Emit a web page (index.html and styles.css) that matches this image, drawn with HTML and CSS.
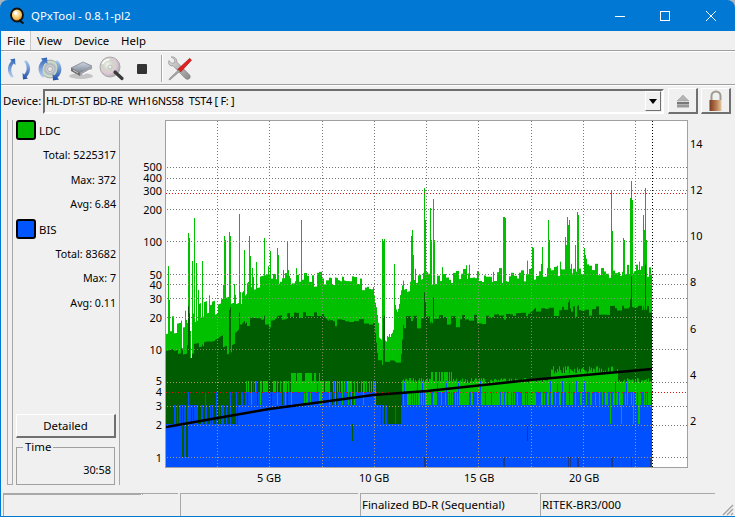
FILE: index.html
```html
<!DOCTYPE html>
<html lang="en">
<head>
<meta charset="utf-8">
<title>QPxTool - 0.8.1-pl2</title>
<link rel="stylesheet" href="styles.css">
</head>
<body>
<div class="window">
  <header class="titlebar">
    <svg class="app-icon" width="20" height="20" viewBox="0 0 20 20">
      <defs><radialGradient id="qg" cx="0.45" cy="0.4" r="0.6"><stop offset="0" stop-color="#fff8e0"/><stop offset="0.6" stop-color="#f6c860"/><stop offset="1" stop-color="#c87820"/></radialGradient></defs>
      <ellipse cx="10" cy="9" rx="6" ry="6.500" fill="url(#qg)" stroke="#111" stroke-width="1.800"/>
      <path d="M12 14l4.500 3.500" stroke="#111" stroke-width="2.200"/>
      <circle cx="8.500" cy="7" r="1.800" fill="#fff"/>
    </svg>
    <span class="title-text">QPxTool - 0.8.1-pl2</span>
    <div class="win-controls">
      <svg class="win-btn" width="46" height="30" viewBox="0 0 46 30"><path d="M18 15.500h10" stroke="#fff"/></svg>
      <svg class="win-btn" width="46" height="30" viewBox="0 0 46 30"><rect x="17.500" y="10.500" width="9" height="9" fill="none" stroke="#fff"/></svg>
      <svg class="win-btn" width="46" height="30" viewBox="0 0 46 30"><path d="M17 10l10 10M27 10L17 20" stroke="#fff"/></svg>
    </div>
  </header>

  <div class="content">
    <nav class="menubar">
      <span class="menu-item menu-active">File</span>
      <span class="menu-item">View</span>
      <span class="menu-item">Device</span>
      <span class="menu-item">Help</span>
    </nav>

    <div class="toolbar">
      <svg class="tool" width="26" height="26" viewBox="0 0 26 26">
        <defs>
          <linearGradient id="ar1" x1="0" y1="0" x2="0" y2="1"><stop offset="0" stop-color="#2f62b8"/><stop offset="1" stop-color="#b8d2f0"/></linearGradient>
          <linearGradient id="ar2" x1="0" y1="0" x2="0" y2="1"><stop offset="0" stop-color="#a8c8ee"/><stop offset="1" stop-color="#1c4ea8"/></linearGradient>
        </defs>
        <path d="M9 2.500L9.500 9 7.700 7.500C4.500 11 4.500 16.500 8 21L5.500 21.500C1 17 .5 10 5.500 5L4 3.500z" fill="url(#ar1)"/>
        <path d="M17 23.500L16.500 17 18.300 18.500C21.500 15 21.500 9.500 18 5L20.500 4.500C25 9 25.500 16 20.500 21L22 22.500z" fill="url(#ar2)"/>
      </svg>
      <svg class="tool" width="26" height="26" viewBox="0 0 26 26">
        <defs>
          <radialGradient id="cd1" cx="0.5" cy="0.5" r="0.55"><stop offset="0.15" stop-color="#eee"/><stop offset="0.5" stop-color="#b0b4c0"/><stop offset="0.75" stop-color="#d0e4c0"/><stop offset="1" stop-color="#a8a8c0"/></radialGradient>
        </defs>
        <circle cx="13" cy="13" r="9" fill="url(#cd1)" stroke="#8a8a9a" stroke-width="0.600"/>
        <circle cx="13" cy="13" r="2.500" fill="#e8e8e8" stroke="#888" stroke-width="0.600"/>
        <path d="M10 1.500L10.500 8 8.700 6.700C5 10 4.500 16 8 21L5.500 21.500C.5 17 0 9 5.500 4.500L4 2.500z" fill="url(#ar1)"/>
        <path d="M16 24.500L15.500 18 17.300 19.300C21 16 21.500 10 18 5L20.500 4.500C25.500 9 26 17 20.500 21.500L22 23.500z" fill="url(#ar2)"/>
      </svg>
      <svg class="tool" width="26" height="26" viewBox="0 0 26 26">
        <defs><linearGradient id="dr1" x1="0" y1="0" x2="0" y2="1"><stop offset="0" stop-color="#cfd8e4"/><stop offset="1" stop-color="#7a8290"/></linearGradient></defs>
        <ellipse cx="13" cy="20" rx="12" ry="3" fill="#c4c4c4"/>
        <path d="M3 12L15 6l9 4-12 7z" fill="url(#dr1)" stroke="#667" stroke-width="0.600"/>
        <path d="M3 12l9 5v3l-9-5z" fill="#6c6c70"/>
        <path d="M12 17l12-7v3L12 20z" fill="#a0a4aa"/>
        <path d="M14 18l8-4.500 1 1-8 4.500z" fill="#fff"/>
        <path d="M5 14l5 3" stroke="#ddd" stroke-width="0.800"/>
      </svg>
      <svg class="tool" width="26" height="26" viewBox="0 0 26 26">
        <defs><radialGradient id="mg" cx="0.4" cy="0.4" r="0.6"><stop offset="0" stop-color="#f4f4f4"/><stop offset="0.4" stop-color="#d0d8c8"/><stop offset="0.7" stop-color="#e0c8d8"/><stop offset="1" stop-color="#b0b0b0"/></radialGradient></defs>
        <circle cx="11" cy="11" r="10" fill="url(#mg)" stroke="#a8a8a8"/>
        <circle cx="11" cy="11" r="2" fill="#eee" stroke="#999" stroke-width="0.500"/>
        <path d="M16 16L23 22.500" stroke="#3a3a3a" stroke-width="3.200" stroke-linecap="round"/>
        <path d="M3.500 8c1.500-3 4-4.500 7-4.500" stroke="#fff" stroke-width="1.500" fill="none"/>
      </svg>
      <span class="stop-icon"></span>
      <span class="tool-sep"></span>
      <svg class="tool" width="25" height="27" viewBox="0 0 27 27">
        <defs><linearGradient id="wr" x1="0" y1="0" x2="1" y2="1"><stop offset="0" stop-color="#e4e4e4"/><stop offset="1" stop-color="#888"/></linearGradient></defs>
        <path d="M2 5l3.500 3 3-1-.5-3.500L4.500 1C8 .5 11 3 10.500 6.500L24 20c1.500 1.500 1.500 3.500 0 4.500s-3 1-4.500-.5L6.500 10.500C3 11.500 1 8.500 2 5z" fill="url(#wr)" stroke="#777" stroke-width="0.600"/>
        <path d="M24.500 2.500l2 2L15 17l-3.500-2.500z" fill="#e02020" stroke="#a01010" stroke-width="0.600"/>
        <path d="M12.500 15L6 21l-4 4 1 1 4-3.500 7-6z" fill="#a8a8a8" stroke="#666" stroke-width="0.500"/>
      </svg>
    </div>

    <div class="devicebar">
      <label class="device-label">Device:</label>
      <div class="combo">
        <span class="combo-text">HL-DT-ST BD-RE&nbsp; WH16NS58&nbsp; TST4 [ F: ]</span>
        <span class="combo-arrow"><i></i></span>
      </div>
      <span class="square-btn">
        <svg width="18" height="18" viewBox="0 0 18 18"><path d="M9 3l6 6H3z" fill="#b4b4b4" stroke="#9a9a9a" stroke-width="0.500"/><rect x="3" y="10" width="12" height="2.500" fill="#777"/><rect x="3" y="13" width="12" height="2.500" fill="#999"/></svg>
      </span>
      <span class="square-btn">
        <svg width="20" height="22" viewBox="0 0 20 22"><defs><linearGradient id="lk" x1="0" y1="0" x2="1" y2="0"><stop offset="0" stop-color="#7a3a20"/><stop offset="0.550" stop-color="#b87a50"/><stop offset="1" stop-color="#e4c8a0"/></linearGradient></defs><path d="M5.500 10V6a4.500 4.500 0 0 1 9 0v4" fill="none" stroke="#a09a90" stroke-width="2"/><rect x="3.500" y="10" width="12" height="11" fill="url(#lk)"/></svg>
      </span>
    </div>

    <main class="main">
      <div class="side-rail"></div>
      <aside class="sidebar">
        <div class="legend"><span class="swatch swatch-ldc"></span><span class="legend-name">LDC</span></div>
        <div class="stat">Total: 5225317</div>
        <div class="stat">Max: 372</div>
        <div class="stat">Avg: 6.84</div>
        <div class="legend"><span class="swatch swatch-bis"></span><span class="legend-name">BIS</span></div>
        <div class="stat">Total: 83682</div>
        <div class="stat">Max: 7</div>
        <div class="stat">Avg: 0.11</div>
        <div class="side-spacer"></div>
        <button class="detailed">Detailed</button>
        <fieldset class="timebox">
          <legend>Time</legend>
          <div class="time-value">30:58</div>
        </fieldset>
      </aside>
      <section class="chart">
        <div class="plot"><canvas id="plot" width="521" height="346"></canvas></div>
        <span class="tick-l" style="top:39px">500</span>
        <span class="tick-l" style="top:50px">400</span>
        <span class="tick-l" style="top:63px">300</span>
        <span class="tick-l" style="top:82px">200</span>
        <span class="tick-l" style="top:114px">100</span>
        <span class="tick-l" style="top:147px">50</span>
        <span class="tick-l" style="top:157px">40</span>
        <span class="tick-l" style="top:171px">30</span>
        <span class="tick-l" style="top:190px">20</span>
        <span class="tick-l" style="top:222px">10</span>
        <span class="tick-l" style="top:253px">5</span>
        <span class="tick-l" style="top:264px">4</span>
        <span class="tick-l" style="top:278px">3</span>
        <span class="tick-l" style="top:297px">2</span>
        <span class="tick-l" style="top:330px">1</span>
        <span class="tick-r" style="top:16px">14</span>
        <span class="tick-r" style="top:62px">12</span>
        <span class="tick-r" style="top:108px">10</span>
        <span class="tick-r" style="top:154px">8</span>
        <span class="tick-r" style="top:201px">6</span>
        <span class="tick-r" style="top:247px">4</span>
        <span class="tick-r" style="top:293px">2</span>
        <span class="tick-x" style="left:137px">5 GB</span>
        <span class="tick-x" style="left:239px">10 GB</span>
        <span class="tick-x" style="left:344px">15 GB</span>
        <span class="tick-x" style="left:449px">20 GB</span>
      </section>
    </main>

    <footer class="statusbar">
      <div class="status-cell status-a"><span class="status-notch"></span></div>
      <div class="status-cell status-b"></div>
      <div class="status-cell status-c">Finalized BD-R (Sequential)</div>
      <div class="status-cell status-d">RITEK-BR3/000</div>
      <svg class="grip" width="12" height="12" viewBox="0 0 12 12"><path d="M11 1L1 11M11 5l-6 6M11 9l-2 2" stroke="#a0a0a0" stroke-width="1.300"/></svg>
    </footer>
  </div>
</div>
<script src="chart.js"></script>
</body>
</html>
```
FILE: styles.css
```css
* { box-sizing: border-box; }
html, body { margin: 0; padding: 0; height: 100%; background: #aab4bc; overflow: hidden; }
body { font: 11.400px/16px "Noto Sans", "Open Sans", sans-serif; color: #000; }
.window { width: 735px; height: 517px; background: #0078d4; border-radius: 8px 8px 0 0; display: flex; flex-direction: column; overflow: hidden; }
.titlebar { height: 31px; flex: none; display: flex; align-items: center; color: #fff; padding-left: 7px; }
.app-icon { flex: none; margin-right: 4px; }
.title-text { flex: 1; white-space: nowrap; }
.win-controls { display: flex; flex: none; }
.win-btn { display: block; }
.content { flex: 1; min-height: 0; margin: 0 0 1px 1px; background: #f0f0f0; display: flex; flex-direction: column; }
.menubar { height: 20px; flex: none; display: flex; padding: 0 0 0 1px; border-bottom: 1px solid #a0a0a0; box-shadow: 0 1px 0 #fff; }
.menu-item { padding: 2px 6px 0 6px; height: 19px; }
.menu-active { padding-left: 5px; padding-right: 5px; background: #f6f6f6; border-right: 1px solid #c8c8c8; width: 29px; }
.toolbar { height: 33px; flex: none; display: flex; align-items: center; padding: 1px 0 0 5px; border-bottom: 1px solid #a0a0a0; box-shadow: 0 1px 0 #fff; margin-top: 1px; }
.tool { display: block; flex: none; margin-right: 5px; }
.stop-icon { width: 10px; height: 10px; background: #333; margin: 0 14px 0 7px; flex: none; border-radius: 1px; }
.tool-sep { width: 1px; height: 27px; background: #a8a8a8; box-shadow: 1px 0 0 #fff; margin-right: 5px; flex: none; }
.devicebar { height: 35px; flex: none; display: flex; align-items: center; padding: 0 3px 3px 2px; }
.device-label { width: 40px; flex: none; }
.combo { width: 621px; height: 25px; flex: none; display: flex; align-items: center; justify-content: space-between; border: 2px solid; border-color: #6e6e6e #fff #fff #6e6e6e; padding: 0 1px 0 1px; margin-right: 4px; }
.combo-text { white-space: nowrap; font-size: 11px; letter-spacing: -0.300px; }
.combo-arrow { width: 16px; height: 20px; display: flex; align-items: center; justify-content: center; background: #f0f0f0; border: 1px solid; border-color: #fff #707070 #707070 #fff; }
.combo-arrow i { width: 0; height: 0; border-left: 4px solid transparent; border-right: 4px solid transparent; border-top: 5px solid #000; }
.square-btn { width: 30px; height: 26px; flex: none; margin-right: 3px; display: flex; align-items: center; justify-content: center; background: #f0f0f0; border: 1px solid; border-color: #fff #707070 #707070 #fff; border-width: 1px 2px 2px 1px; }
.main { flex: 1; min-height: 0; display: flex; padding: 0 0 0 6px; }
.side-rail { width: 6px; height: 365px; flex: none; border: 1px solid #a8a8a8; border-width: 0 1px 1px 1px; }
.sidebar { width: 107px; height: 365px; flex: none; display: flex; flex-direction: column; border-right: 1px solid #a8a8a8; padding: 0 3px 0 3px; }
.legend { display: flex; align-items: center; gap: 3px; height: 20px; flex: none; }
.legend-name { padding-top: 2px; }
.stat + .legend { margin-top: 2px; }
.legend + .stat { margin-top: 3px; }
.swatch { width: 20px; height: 20px; border: 2px solid #000; border-radius: 3px; flex: none; }
.swatch-ldc { background: #00b800; }
.swatch-bis { background: #0055ff; }
.stat { height: 24.500px; flex: none; text-align: right; line-height: 24px; white-space: nowrap; font-size: 10.700px; }
.side-spacer { flex: 1; }
.detailed { width: 100px; height: 24px; flex: none; font: inherit; color: inherit; padding: 0; background: #f0f0f0; border: 1px solid; border-color: #fff #707070 #707070 #fff; border-width: 1px 2px 2px 1px; margin-bottom: 2px; }
.timebox { width: 99px; height: 45px; flex: none; margin: 0; border: 1px solid #a0a0a0; padding: 0 3px 0 0; }
.timebox legend { padding: 0 2px; margin-left: 6px; line-height: 14px; }
.time-value { text-align: right; margin-top: 8px; line-height: 16px; font-size: 10.900px; }
.chart { flex: 1; position: relative; }
.plot { position: absolute; left: 45px; top: 0; width: 523px; height: 348px; border: 1px solid #a0a0a0; background: #fff; }
.plot canvas { display: block; }
.tick-l, .tick-r, .tick-x { position: absolute; line-height: 16px; white-space: nowrap; font-size: 10.900px; }
.tick-l { right: 573px; }
.tick-r { left: 570px; }
.tick-x { top: 350px; }
.statusbar { height: 24px; flex: none; display: flex; gap: 2px; padding: 1px 0 0 2px; position: relative; }
.status-cell { height: 23px; border: 1px solid #a8a8a8; border-width: 1px 0 0 1px; padding: 3px 0 0 1px; white-space: nowrap; position: relative; }
.status-a { width: 175px; }
.status-notch { position: absolute; left: 0; top: 0; width: 138px; height: 1px; background: #a8a8a8; box-shadow: 1px 0 0 #a8a8a8; border-right: 1px solid #fff; }
.status-b { width: 178px; }
.status-c { width: 178px; }
.status-d { width: 175px; }
.grip { position: absolute; right: 1px; bottom: 0; }
```
FILE: chart.js
```js
(function () {
  var canvas = document.getElementById("plot");
  var ctx = canvas.getContext("2d");
  var OX = 166, OY = 121, END = 652, BOTTOM = 467;
  var LIGHT = "#00c000", DARK = "#005c00", BLUE = "#0050ff";

  var seed = 20240611;
  function rnd() {
    seed = (seed + 0x6d2b79f5) | 0;
    var t = Math.imul(seed ^ (seed >>> 15), 1 | seed);
    t = (t + Math.imul(t ^ (t >>> 7), 61 | t)) ^ t;
    return ((t ^ (t >>> 14)) >>> 0) / 4294967296;
  }
  function interp(pts, x) {
    for (var i = 1; i < pts.length; i++) {
      if (x <= pts[i][0]) {
        var a = pts[i - 1], b = pts[i];
        return a[1] + (b[1] - a[1]) * (x - a[0]) / (b[0] - a[0]);
      }
    }
    return pts[pts.length - 1][1];
  }
  function rect(color, x, top, bottom) {
    ctx.fillStyle = color;
    ctx.fillRect(x - OX, top - OY, 1, bottom - top);
  }

  var lightEnv = [[166,325],[186,322],[200,312],[218,305],[240,296],[250,284],[270,280],[330,279],[345,283],[372,283],[378,330],[388,340],[398,310],[403,286],[425,278],[480,275],[530,276],[560,272],[652,270]];
  var darkEnv = [[166,352],[190,345],[215,340],[236,330],[246,318],[268,318],[290,314],[323,314],[330,321],[374,321],[378,362],[400,362],[403,318],[480,316],[530,314],[536,309],[652,307]];
  var spikes = {168:266,169:300,188:233,189:238,192:261,194:218,196:263,198:290,202:261,224:236,225:240,229:232,230:236,239:214,244:250,249:236,250:256,256:262,264:238,270:251,277:248,278:255,287:241,288:270,301:220,382:239,383:242,384:239,394:264,411:236,412:230,413:255,424:188,425:220,430:208,431:240,433:199,434:240,503:217,504:217,505:218,532:247,533:248,542:247,548:220,549:240,565:237,566:245,567:217,568:225,569:220,575:245,577:212,578:215,584:248,585:255,611:190,612:231,623:238,624:240,630:198,631:181,632:200,643:215,644:230,645:188,646:240};
  var x, cols = [];
  var blockTop = 0, blockDark = 0, blockDarkLen = 0, blockLen = 0;

  for (x = OX; x < END; x++) {
    if (blockLen-- <= 0) { blockTop = (rnd() - 0.5) * (x < 240 ? 24 : 15); blockLen = 1 + Math.floor(rnd() * 2); }
    if (blockDarkLen-- <= 0) { blockDark = rnd() * rnd() * (x < 240 ? 34 : 14) - 2; blockDarkLen = 1 + Math.floor(rnd() * 4); }
    var top = interp(lightEnv, x) + blockTop;
    if (rnd() < 0.05) top -= 6 + rnd() * 12;
    if (rnd() < 0.02 && x < 240) top += 30;
    var dTop = interp(darkEnv, x) + blockDark;
    if (spikes[x]) {
      top = spikes[x];
      if (rnd() < 0.6) dTop = Math.min(dTop, top + 70 + rnd() * 45);
    }
    var r = rnd(), blueTop, dBot;
    if (x < 172) { blueTop = 424; dBot = 424; }
    else if (x < 240) {
      blueTop = r < 0.5 ? 424 : r < 0.93 ? 405 : 392;
      dBot = blueTop;
    } else if (x < 377) {
      blueTop = r < 0.72 ? 392 : r < 0.94 ? 405 : 381;
      dBot = rnd() < 0.4 ? blueTop : 381;
      if (x > 290 && x < 320) dBot = rnd() < 0.15 ? 381 : 373;
      if (x < 262 && rnd() < 0.5) dBot = blueTop;
    } else if (x < 402) {
      blueTop = r < 0.75 ? 424 : 405;
      dBot = blueTop;
    } else {
      blueTop = r < 0.45 ? 392 : r < 0.92 ? 405 : 381;
      dBot = 378 + rnd() * 5;
      if (x > 550 && x < 618) dBot = 366 + rnd() * 8;
      if (x > 430 && x < 452) dBot = rnd() < 0.5 ? 372 : 381;
      if (x > 600 && rnd() < 0.06) blueTop = 424;
    }
    if (blueTop < dBot) dBot = blueTop;
    cols[x] = { top: top };
    rect(LIGHT, x, top, BOTTOM);
    rect(DARK, x, dTop, dBot);
    rect(BLUE, x, blueTop, BOTTOM);
  }

  [182, 183, 186, 187].forEach(function (v) { rect(DARK, v, 424, 457); });
  [352, 527].forEach(function (v) { rect(DARK, v, 424, 441); });
  [424, 425, 503, 504, 568, 570, 577, 578, 611, 612, 631, 650].forEach(function (v) { rect("#1a3a90", v, 457, BOTTOM); });

  var hLines = [167, 177.5, 190, 208.5, 241, 273.5, 284, 298, 316.5, 349, 381.5, 405.5, 424.5, 457];
  var vLines = [217, 269, 322, 374, 426, 478, 531, 583, 635];
  function dot(px, py, color) {
    ctx.fillStyle = color;
    ctx.fillRect(px - OX, py - OY, 1, 1);
  }
  hLines.forEach(function (h) {
    var py = Math.round(h);
    for (var px = OX + 1; px < 687; px += 3) {
      var over = px < END && py > cols[px].top;
      dot(px, py, over ? (py > 380 ? "rgba(200,165,110,.85)" : "rgba(160,150,130,.8)") : "#777");
    }
  });
  vLines.forEach(function (vx) {
    for (var py = OY; py < BOTTOM; py += 3) {
      var over = py > cols[vx].top;
      dot(vx, py, over ? (py > 380 ? "rgba(200,165,110,.85)" : "rgba(160,150,130,.8)") : "#777");
    }
  });
  [193, 392].forEach(function (py) {
    for (var px = OX; px < 687; px += 3) dot(px, py, "#e01010");
  });
  for (var py = OY; py < BOTTOM; py += 3) dot(END, py, "#000");

  ctx.strokeStyle = "#000";
  ctx.lineWidth = 2.6;
  ctx.lineJoin = "round";
  ctx.beginPath();
  [[166,427],[269,409],[322,402],[373,395],[427,391],[530,380],[652,369]].forEach(function (p, i) {
    if (i) ctx.lineTo(p[0] - OX, p[1] - OY); else ctx.moveTo(p[0] - OX, p[1] - OY);
  });
  ctx.stroke();
})();
```
